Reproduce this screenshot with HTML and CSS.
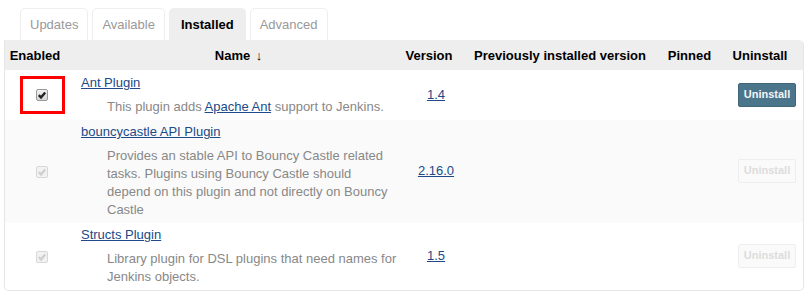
FILE: index.html
```html
<!DOCTYPE html>
<html lang="en">
<head>
  <meta charset="UTF-8" />
  <title>Plugin Manager</title>
  <link rel="stylesheet" href="styles.css">
</head>
<body>
  <div class="tabs">
    <a class="tab" href="#">Updates</a>
    <a class="tab" href="#">Available</a>
    <a class="tab active" href="#">Installed</a>
    <a class="tab" href="#">Advanced</a>
  </div>

  <table class="plugins">
    <colgroup>
      <col class="col-enabled">
      <col class="col-name">
      <col class="col-version">
      <col class="col-previous">
      <col class="col-pinned">
      <col class="col-uninstall">
    </colgroup>
    <thead>
      <tr>
        <th>Enabled<span class="sortarrow"></span></th>
        <th>Name<span class="sortarrow">&#8595;</span></th>
        <th>Version<span class="sortarrow"></span></th>
        <th>Previously installed version<span class="sortarrow"></span></th>
        <th>Pinned<span class="sortarrow"></span></th>
        <th>Uninstall<span class="sortarrow"></span></th>
      </tr>
    </thead>
    <tbody>
      <tr>
        <td class="enable">
          <span class="highlight">
            <span class="check">
              <svg viewBox="0 0 12 12" width="12" height="12"><path d="M2.8 6.2 L5 8.4 L9.2 3.4"/></svg>
            </span>
          </span>
        </td>
        <td class="name">
          <a href="#">Ant Plugin</a>
          <div class="excerpt">This plugin adds <a href="#">Apache Ant</a> support to Jenkins.</div>
        </td>
        <td class="version"><a href="#">1.4</a></td>
        <td></td>
        <td></td>
        <td class="uninstall"><button class="btn">Uninstall</button></td>
      </tr>
      <tr class="alt">
        <td class="enable">
          <span class="check disabled">
            <svg viewBox="0 0 12 12" width="12" height="12"><path d="M2.8 6.2 L5 8.4 L9.2 3.4"/></svg>
          </span>
        </td>
        <td class="name">
          <a href="#">bouncycastle API Plugin</a>
          <div class="excerpt">Provides an stable API to Bouncy Castle related tasks. Plugins using Bouncy Castle should depend on this plugin and not directly on Bouncy Castle</div>
        </td>
        <td class="version"><a href="#">2.16.0</a></td>
        <td></td>
        <td></td>
        <td class="uninstall"><button class="btn" disabled>Uninstall</button></td>
      </tr>
      <tr>
        <td class="enable">
          <span class="check disabled">
            <svg viewBox="0 0 12 12" width="12" height="12"><path d="M2.8 6.2 L5 8.4 L9.2 3.4"/></svg>
          </span>
        </td>
        <td class="name">
          <a href="#">Structs Plugin</a>
          <div class="excerpt">Library plugin for DSL plugins that need names for Jenkins objects.</div>
        </td>
        <td class="version"><a href="#">1.5</a></td>
        <td></td>
        <td></td>
        <td class="uninstall"><button class="btn" disabled>Uninstall</button></td>
      </tr>
    </tbody>
  </table>
</body>
</html>
```

FILE: styles.css
```css
body {
  margin: 0;
  padding: 8px 0 0 4px;
  font-family: 'Liberation Sans', Arial, sans-serif;
  font-size: 13px;
  color: #333;
  background: #fff;
}
a {
  color: #204a87;
}

/* Tabs */
.tabs {
  display: flex;
  gap: 4px;
  margin-left: 16px;
  height: 32px;
}
.tab {
  display: block;
  box-sizing: border-box;
  height: 32px;
  line-height: 31px;
  padding: 0 9px;
  border: 1px solid #eee;
  border-bottom: none;
  border-radius: 5px 5px 0 0;
  color: #999;
  text-decoration: none;
}
.tab.active {
  background: #eee;
  border-color: #eee;
  color: #000;
  font-weight: bold;
  padding: 0 11px;
}

/* Table */
.plugins {
  width: 800px;
  table-layout: fixed;
  border-collapse: separate;
  border-spacing: 0;
  border: 1px solid #e6e6e6;
  border-top: none;
  border-radius: 0 5px 5px 5px;
}
.col-enabled { width: 72px; }
.col-name { width: 323px; }
.col-version { width: 70px; }
.col-previous { width: 192px; }
.col-pinned { width: 67px; }
.col-uninstall { width: 74px; }

.plugins th {
  height: 30px;
  padding: 0;
  background: #eee;
  color: #000;
  font-weight: bold;
  text-align: center;
  white-space: nowrap;
}
.plugins th:last-child {
  border-top-right-radius: 5px;
}
.sortarrow {
  display: inline-block;
  width: 12px;
  text-align: right;
}

.plugins td {
  padding: 3px 2px 4px 4px;
  vertical-align: middle;
  line-height: 18px;
}
.plugins tbody tr:first-child td {
  padding-top: 4px;
}
.plugins tr.alt td {
  background: #fafafa;
}
.plugins tbody tr:last-child td:first-child {
  border-bottom-left-radius: 5px;
}
.plugins tbody tr:last-child td:last-child {
  border-bottom-right-radius: 5px;
}

.enable {
  text-align: center;
}
.highlight {
  display: inline-flex;
  align-items: center;
  justify-content: center;
  box-sizing: border-box;
  width: 45px;
  height: 38px;
  border: 3px solid #f00;
  vertical-align: middle;
}
.check {
  display: inline-flex;
  box-sizing: border-box;
  width: 12px;
  height: 12px;
  border: 1px solid #9a9a9a;
  border-radius: 2px;
  background: linear-gradient(#f2f2f2, #d6d6d6);
  vertical-align: middle;
}
.check svg {
  margin: -1px;
}
.check path {
  fill: none;
  stroke: #222;
  stroke-width: 2.4;
}
.check.disabled {
  border-color: #d8d8d8;
  background: #f2f2f2;
}
.check.disabled path {
  stroke: #d0d0d0;
}

.name {
  vertical-align: top !important;
}
.excerpt {
  margin: 6px 0 0 26px;
  color: #888;
}
.excerpt a {
  color: #204a87;
}

.version {
  text-align: center;
}
.uninstall {
  text-align: center;
}
.btn {
  font-family: 'Liberation Sans', Arial, sans-serif;
  font-size: 11px;
  font-weight: bold;
  line-height: 13px;
  padding: 4px 5px 5px;
  border: 1px solid #3f6679;
  border-radius: 2px;
  background: #4b758b;
  color: #f4f4f4;
  cursor: pointer;
}
.btn:disabled {
  background: #fafafa;
  border-color: #eee;
  color: #ddd;
  cursor: default;
}
```
